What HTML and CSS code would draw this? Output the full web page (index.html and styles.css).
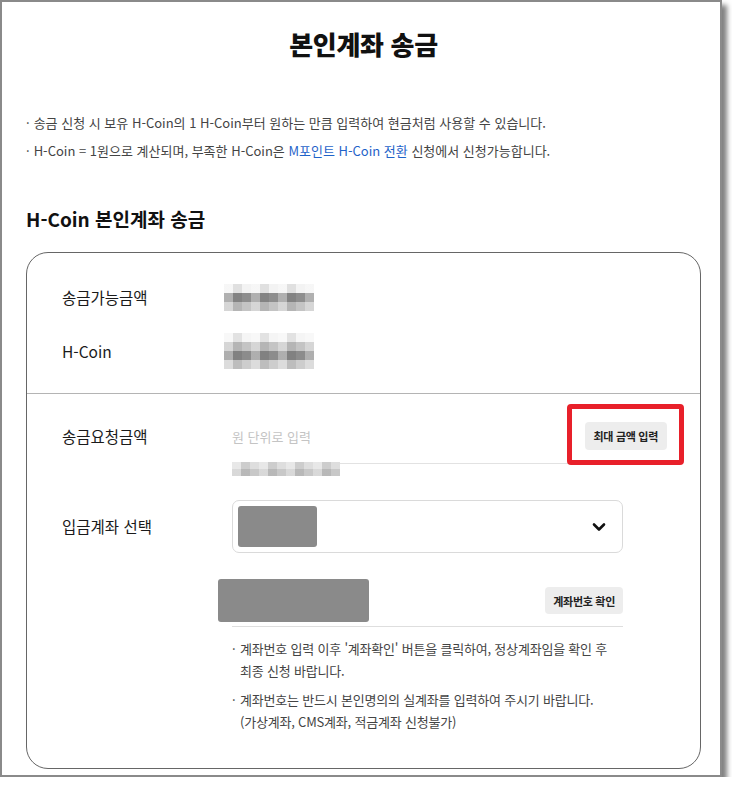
FILE: index.html
```html
<!DOCTYPE html>
<html lang="ko">
<head>
    <meta charset="UTF-8">
    <meta name="viewport" content="width=device-width, initial-scale=1.0">
    <title>본인계좌 송금</title>
    <link rel="stylesheet" href="styles.css">
</head>
<body>
    <div class="frame">
        <h1 class="page-title">본인계좌 송금</h1>

        <ul class="notice">
            <li>송금 신청 시 보유 H-Coin의 1 H-Coin부터 원하는 만큼 입력하여 현금처럼 사용할 수 있습니다.</li>
            <li>H-Coin = 1원으로 계산되며, 부족한 H-Coin은 <a href="#" class="link">M포인트 H-Coin 전환</a> 신청에서 신청가능합니다.</li>
        </ul>

        <h2 class="section-title">H-Coin 본인계좌 송금</h2>

        <div class="card">
            <!-- balance summary -->
            <div class="card-summary">
                <div class="summary-row">
                    <span class="label">송금가능금액</span>
                    <span class="mosaic"></span>
                </div>
                <div class="summary-row">
                    <span class="label">H-Coin</span>
                    <span class="mosaic mosaic-coin"></span>
                </div>
            </div>

            <!-- transfer form -->
            <div class="card-form">
                <div class="form-row">
                    <span class="label label-amount">송금요청금액</span>
                    <div class="field-col">
                        <div class="amount-field">
                            <input type="text" class="amount-input" placeholder="원 단위로 입력">
                            <button type="button" class="btn-small">최대 금액 입력</button>
                            <span class="highlight"></span>
                        </div>
                        <span class="mosaic mosaic-hint"></span>
                    </div>
                </div>

                <div class="form-row form-row-select">
                    <span class="label label-select">입금계좌 선택</span>
                    <div class="select-box">
                        <span class="redacted redacted-bank"></span>
                        <svg class="chevron" width="14" height="10" viewBox="0 0 14 10">
                            <path d="M2 2.5 L7 7.5 L12 2.5" fill="none" stroke="#111" stroke-width="2.6" stroke-linecap="round" stroke-linejoin="round"/>
                        </svg>
                    </div>
                </div>

                <div class="form-row form-row-account">
                    <div class="field-col">
                        <div class="account-field">
                            <span class="redacted redacted-account"></span>
                            <button type="button" class="btn-small">계좌번호 확인</button>
                        </div>
                        <ul class="account-notes">
                            <li>계좌번호 입력 이후 '계좌확인' 버튼을 클릭하여, 정상계좌임을 확인 후 최종 신청 바랍니다.</li>
                            <li>계좌번호는 반드시 본인명의의 실계좌를 입력하여 주시기 바랍니다.<br>(가상계좌, CMS계좌, 적금계좌 신청불가)</li>
                        </ul>
                    </div>
                </div>
            </div>
        </div>
    </div>
</body>
</html>
```

FILE: styles.css
```css
body {
    margin: 0;
    padding: 0;
    background-color: #ffffff;
    font-family: 'Noto Sans CJK KR', 'Noto Sans', sans-serif;
    color: #222;
}

/* captured window frame */
.frame {
    box-sizing: border-box;
    width: 722px;
    height: 777px;
    border: 2px solid #8a8a8a;
    background-color: #ffffff;
    box-shadow: 5px 5px 5px rgba(0, 0, 0, 0.5);
    padding: 0 19px 0 24px;
}

.page-title {
    margin: 0;
    padding-top: 25px;
    text-align: center;
    font-size: 26px;
    line-height: 34px;
    font-weight: 900;
    color: #111;
    letter-spacing: -0.3px;
}

.notice {
    list-style: none;
    margin: 52px 0 0;
    padding: 0;
    font-size: 13px;
    line-height: 20px;
    color: #444;
}

.notice li + li {
    margin-top: 8px;
}

.notice li::before {
    content: '·';
    margin-right: 4px;
}

.link {
    color: #1f63c9;
    text-decoration: none;
}

.section-title {
    margin: 45px 0 0;
    font-size: 19px;
    line-height: 26px;
    font-weight: 700;
    color: #111;
}

.card {
    margin-top: 20px;
    border: 1px solid #666;
    border-radius: 22px;
}

.card-summary {
    padding: 26px 0 24px;
    border-bottom: 1px solid #b4b4b4;
}

.summary-row {
    display: grid;
    grid-template-columns: 170px auto;
    align-items: center;
    height: 36px;
    padding-left: 35px;
}

.summary-row + .summary-row {
    margin-top: 18px;
}

.label {
    font-size: 15.5px;
    color: #1a1a1a;
}

/* pixelated values */
.mosaic {
    position: relative;
    display: block;
    width: 90px;
    height: 27px;
    margin-left: -8px;
    background: linear-gradient(#f3f3f3 0 9px, #8e8e8e 9px 18px, #c4c4c4 18px 27px);
}

.mosaic::after {
    content: '';
    position: absolute;
    inset: 0;
    background: repeating-linear-gradient(90deg, rgba(255, 255, 255, 0.3) 0 9px, rgba(0, 0, 0, 0.08) 9px 18px, transparent 18px 27px);
}

.mosaic-coin {
    height: 36px;
    background: linear-gradient(#f5f5f5 0 9px, #c4c4c4 9px 18px, #8c8c8c 18px 27px, #cdcdcd 27px 36px);
}

.mosaic-hint {
    width: 108px;
    height: 14px;
    margin: -2px 0 0 0;
    background: linear-gradient(#dedede 0 7px, #c8c8c8 7px 14px);
}

.card-form {
    padding: 24px 0 35px 35px;
}

.form-row {
    display: grid;
    grid-template-columns: 170px auto;
    align-items: start;
}

.label-amount {
    margin-top: 4px;
    line-height: 28px;
}

.amount-field {
    position: relative;
    display: flex;
    justify-content: space-between;
    align-items: center;
    width: 435px;
    padding: 4px 0 13px;
    border-bottom: 1px solid #e2e2e2;
}

.amount-input {
    border: none;
    outline: none;
    padding: 0;
    font-family: inherit;
    font-size: 13px;
    color: #222;
    background: transparent;
}

.amount-input::placeholder {
    color: #c4c4c4;
}

.btn-small {
    border: none;
    border-radius: 4px;
    background-color: #ededed;
    font-family: inherit;
    font-size: 11px;
    font-weight: 700;
    color: #222;
    padding: 0 9px;
    height: 28px;
    letter-spacing: -0.3px;
}

/* red annotation box around the max-amount button */
.highlight {
    position: absolute;
    left: 335px;
    top: -14px;
    width: 117px;
    height: 61px;
    box-sizing: border-box;
    border: 5px solid #e8202a;
    border-radius: 4px;
}

.form-row-select {
    margin-top: 24px;
}

.label-select {
    line-height: 53px;
}

.select-box {
    box-sizing: border-box;
    display: flex;
    justify-content: space-between;
    align-items: center;
    width: 391px;
    height: 53px;
    padding: 5px 16px 5px 5px;
    border: 1px solid #dadada;
    border-radius: 7px;
}

.redacted {
    display: block;
    background-color: #8a8a8a;
    border-radius: 3px;
}

.redacted-bank {
    width: 79px;
    height: 41px;
}

.form-row-account {
    margin-top: 26px;
}

.form-row-account .field-col {
    grid-column: 2;
}

.account-field {
    display: flex;
    justify-content: space-between;
    align-items: center;
    width: 391px;
    padding-bottom: 4px;
    border-bottom: 1px solid #dedede;
}

.redacted-account {
    width: 151px;
    height: 43px;
    margin-left: -14px;
}

.account-field .btn-small {
    height: 27px;
    padding: 0 8px;
}

.account-notes {
    list-style: none;
    margin: 11px 0 0;
    padding: 0 0 0 8px;
    width: 383px;
    font-size: 13px;
    line-height: 22px;
    color: #444;
    letter-spacing: -0.2px;
    word-break: keep-all;
}

.account-notes li {
    text-indent: -8px;
}

.account-notes li + li {
    margin-top: 7px;
}

.account-notes li::before {
    content: '·';
    display: inline-block;
    width: 8px;
    text-indent: 0;
}
```
